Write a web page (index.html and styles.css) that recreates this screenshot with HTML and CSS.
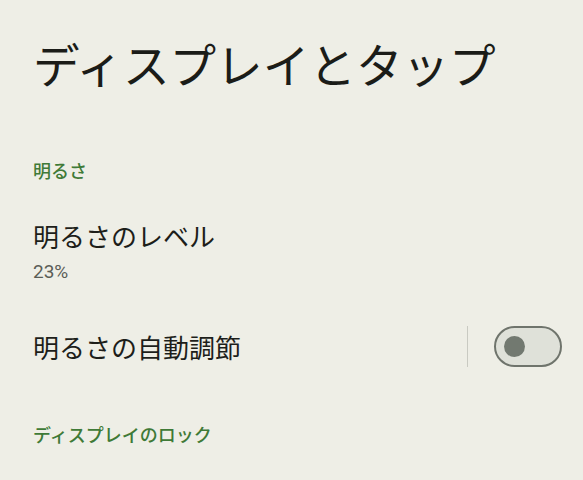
FILE: index.html
```html
<!DOCTYPE html>
<html lang="ja">
<head>
<meta charset="utf-8">
<link rel="stylesheet" href="styles.css">
</head>
<body>
<div class="page">
  <h1 class="title">ディスプレイとタップ</h1>
  <div class="section-header">明るさ</div>
  <div class="item">
    <div class="item-title">明るさのレベル</div>
    <div class="item-summary">23%</div>
  </div>
  <div class="item-row">
    <div class="item-title grow">明るさの自動調節</div>
    <div class="divider"></div>
    <div class="switch"><div class="knob"></div></div>
  </div>
  <div class="section-header second">ディスプレイのロック</div>
</div>
</body>
</html>
```

FILE: styles.css
```css
html, body {
  margin: 0;
  padding: 0;
  background: #eeeee6;
}
body {
  font-family: Roboto, "Noto Sans CJK JP", sans-serif;
  color: #1b1c18;
}
.page {
  padding: 35px 21px 0 33px;
}
.title {
  margin: 0;
  font-family: "Noto Sans CJK JP", sans-serif;
  font-weight: 400;
  font-size: 46.6px;
  line-height: 56px;
  color: #1b1c18;
}
.section-header {
  margin-top: 67px;
  font-family: "Noto Sans CJK JP", sans-serif;
  font-weight: 500;
  font-size: 18px;
  line-height: 24px;
  color: #3f7a37;
}
.section-header.second {
  margin-top: 55px;
}
.item {
  padding-top: 38px;
}
.item-title {
  font-family: "Noto Sans CJK JP", sans-serif;
  font-size: 26px;
  line-height: 32px;
  color: #1d1e1a;
}
.item-summary {
  margin-top: 8px;
  font-family: Roboto, sans-serif;
  font-size: 19px;
  line-height: 24px;
  color: #5a5d56;
}
.item-row {
  margin-top: 42px;
  display: flex;
  align-items: center;
  height: 41px;
}
.grow {
  flex: 1;
}
.divider {
  width: 1px;
  height: 41px;
  background: #c9cac2;
  margin-right: 26px;
}
.switch {
  box-sizing: border-box;
  width: 68px;
  height: 41px;
  border: 2.5px solid #6f746c;
  border-radius: 21px;
  background: #dfe1d9;
  display: flex;
  align-items: center;
  padding-left: 8px;
}
.knob {
  width: 21px;
  height: 21px;
  border-radius: 50%;
  background: #727970;
}
```
